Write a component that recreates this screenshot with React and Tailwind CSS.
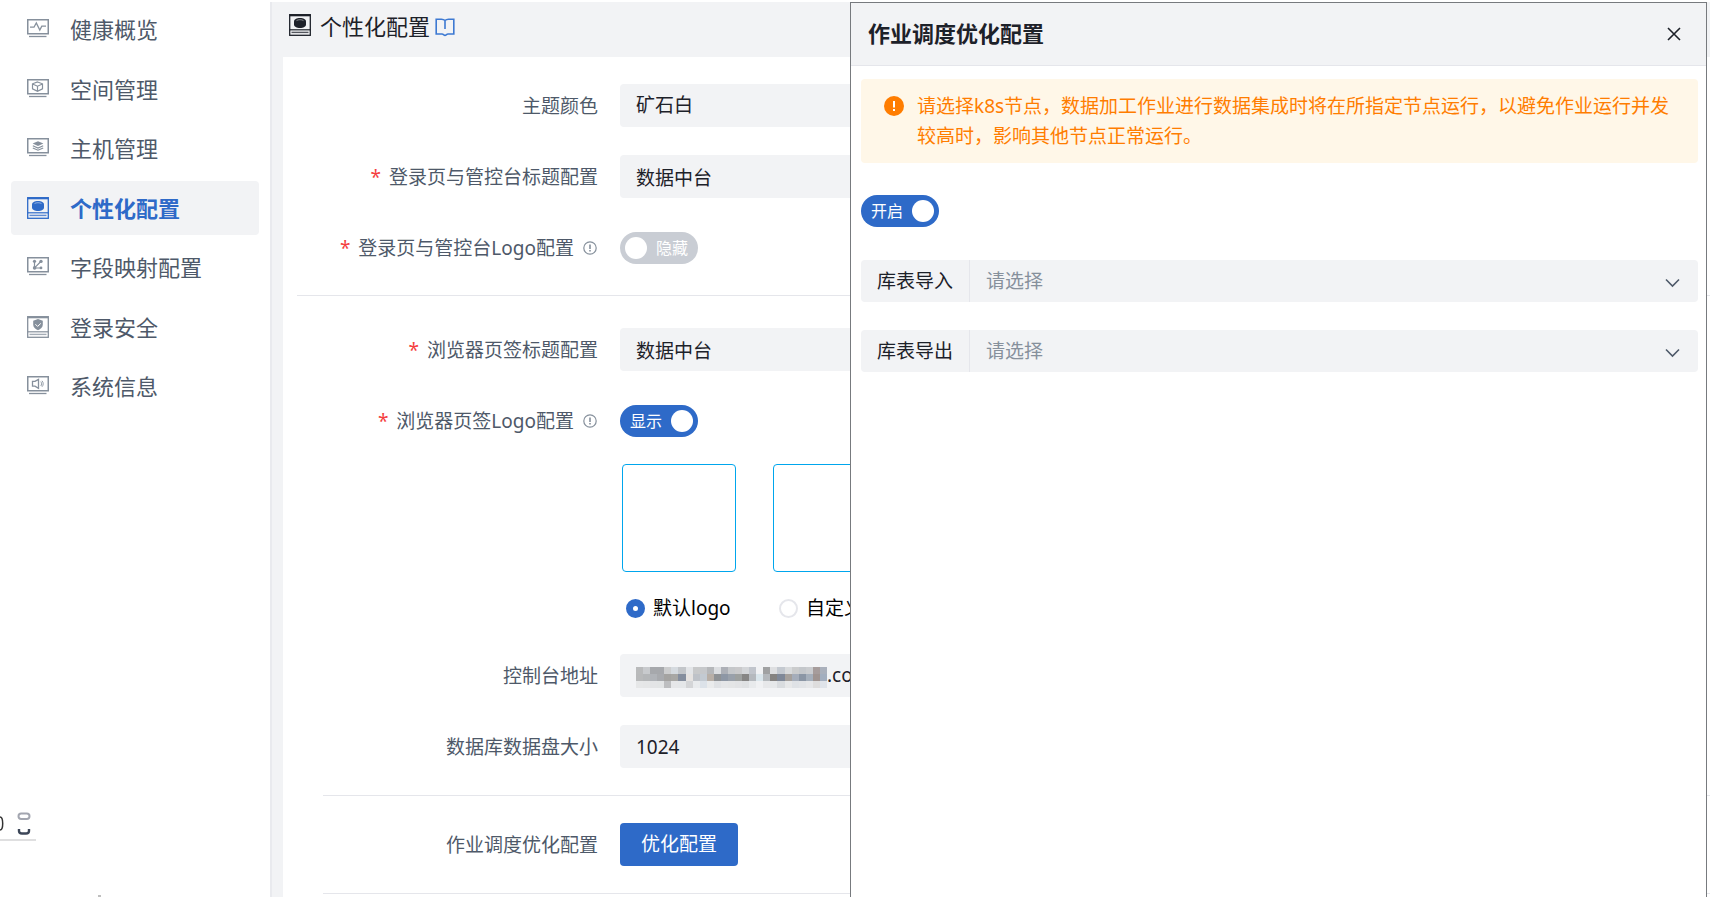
import { useState } from "react";
import clsx from "clsx";

const Monitor = ({ children }) => (
  <svg width="22" height="22" viewBox="0 0 22 22" fill="none" stroke="currentColor">
    <g transform="translate(0 1)">
      <rect x="0.75" y="0.75" width="20.5" height="14" strokeWidth="1.5" />
      <path d="M2 17.5H19.5" strokeWidth="1.3" />
      {children}
    </g>
  </svg>
);

const Cabinet = ({ children }) => (
  <svg width="22" height="22" viewBox="0 0 22 22" fill="none" stroke="currentColor">
    <rect x="0.7" y="0.7" width="20.6" height="20.6" strokeWidth="1.3" />
    <path d="M0.5 1.3H21.5" strokeWidth="2" />
    <path d="M0.5 15.8H21.5" strokeWidth="1.2" />
    <path d="M2.5 18.4H19.5" strokeWidth="1.4" strokeOpacity="0.75" />
    {children}
  </svg>
);

const HealthIcon = () => (
  <Monitor>
    <path d="M3 8.2H7L9.3 4L12.8 11L14.8 7.2H19" strokeWidth="1.3" />
  </Monitor>
);

const SpaceIcon = () => (
  <Monitor>
    <path d="M10.5 3L15.5 4.8V9.8L10.5 12.3L5.5 9.8V4.8ZM5.5 5L10.5 7.2L15.5 5M10.5 7.2V12.2" strokeWidth="1.2" />
  </Monitor>
);

const HostIcon = () => (
  <Monitor>
    <path d="M11 3.2L16.4 5.6L11 8L5.6 5.6Z" fill="currentColor" stroke="none" />
    <path d="M5.8 7.8L11 10L16.2 7.8M5.8 10L11 12.2L16.2 10" strokeWidth="1.2" />
  </Monitor>
);

const PersonalIcon = () => (
  <Cabinet>
    <path d="M5 7.5C5 5.4 7.6 4 11 4S17 5.4 17 7.5V10.5C17 12.6 14.4 14 11 14S5 12.6 5 10.5Z" fill="currentColor" stroke="none" />
    <path d="M7.5 6.6C9 5.4 13 5.4 14.5 6.6" stroke="#fff" strokeOpacity="0.5" strokeWidth="0.9" />
  </Cabinet>
);

const FieldIcon = () => (
  <Monitor>
    <path d="M7.5 4.5V11H13.5M7.8 10.7L13.8 4.5" strokeWidth="1.2" />
    <g fill="currentColor" stroke="none">
      <circle cx="7.5" cy="4.3" r="1.6" />
      <circle cx="14" cy="4.4" r="1.7" />
      <circle cx="7.6" cy="10.9" r="1.8" />
      <circle cx="14" cy="10.9" r="1.4" />
    </g>
  </Monitor>
);

const SecurityIcon = () => (
  <Cabinet>
    <path d="M11 3L15.8 4.8V8.8C15.8 11.4 13.6 13.3 11 14.2C8.4 13.3 6.2 11.4 6.2 8.8V4.8Z" fill="currentColor" stroke="none" />
    <path d="M8.4 8.2L10.6 10.4L13.8 7.4" stroke="#fff" strokeWidth="1" />
  </Cabinet>
);

const SystemIcon = () => (
  <Monitor>
    <path d="M5.5 5.4V10.2H8L11.5 12.4V3.4L8 5.4Z" strokeWidth="1.3" />
    <path d="M13.8 5.6C14.8 6.8 14.8 8.8 13.8 10M15 4.8C16.6 6.4 16.6 9.2 15 10.8" strokeWidth="0.9" />
  </Monitor>
);

const BookIcon = () => (
  <svg width="20" height="19" viewBox="0 0 20 19" fill="none" stroke="#3d79d2" strokeWidth="1.6">
    <path d="M10 2.5C8.8 1.4 7.6 1.2 6.5 1.2H1.2V16H7C8.5 16 9 17.4 10 17.4S11.5 16 13 16H18.8V1.2H13.5C12.4 1.2 11.2 1.4 10 2.5ZM10 2.5V11" />
  </svg>
);

const HintIcon = () => (
  <svg width="14" height="14" viewBox="0 0 14 14" fill="none" stroke="#86909c" strokeWidth="1.2">
    <circle cx="7" cy="7" r="6.2" />
    <path d="M7 3.4V8M7 9V10.4" strokeWidth="1.6" />
  </svg>
);

const menu = [
  { text: "健康概览", icon: HealthIcon },
  { text: "空间管理", icon: SpaceIcon },
  { text: "主机管理", icon: HostIcon },
  { text: "个性化配置", icon: PersonalIcon },
  { text: "字段映射配置", icon: FieldIcon },
  { text: "登录安全", icon: SecurityIcon },
  { text: "系统信息", icon: SystemIcon },
];

// colours of the masked part of the console address, one cell each
const mask = [
  ["#b9babb", "#c8cacd", "#a6a8ac", "#a6a8ac", "#cccdce", "#d5dadf", "#c3c6ca", "#e3e5e8", "#c8c9ca", "#c6c8cb", "#b5b7ba", "#dcdee1", "#adb0b7", "#c5c7ca", "#c9c9cb", "#d3d5d8", "#c1c5cc", "#f1f2f4", "#a0a1a2", "#dedfe1", "#c4c9d0", "#d8dadc", "#cbcccd", "#c4c7cb", "#cacccf", "#a69c9b", "#aab0bc"],
  ["#b8b9ba", "#b4b6b8", "#b0b3b8", "#a8aaae", "#a4a3a1", "#a8a7a4", "#858e9e", "#e6e3e1", "#bec2c8", "#c3cad2", "#b8afa7", "#8f9295", "#8e97a5", "#99a0aa", "#9da09f", "#868584", "#b5b9be", "#dae6ec", "#b4b8bc", "#858381", "#7f8898", "#a5a09c", "#a5adba", "#8b96a5", "#a5afbb", "#9f9491", "#a3aebf"],
  ["#e6e7e8", "#e5e6e7", "#e3e4e6", "#e2e4e5", "#bdbec0", "#e6e7e9", "#e5e7e9", "#d4d5d7", "#e9ebed", "#dce2e9", "#eaebec", "#e0e2e5", "#e5e6e8", "#e4e5e6", "#e2e3e5", "#dfe1e3", "#e8eaec", "#f0f1f3", "#e7e8ea", "#e6e8ea", "#d9dcdf", "#e7e8e9", "#dfe2e6", "#e2e4e7", "#e6e7e9", "#dedddd", "#dfe3e9"],
];

const Mask = () => (
  <svg className="mt-1 shrink-0" width="191" height="21" viewBox="0 0 189 21" preserveAspectRatio="none" shapeRendering="crispEdges">
    {mask.map((row, y) =>
      row.map((fill, x) => <rect key={`${x}-${y}`} x={x * 7} y={y * 7} width="7" height="7" fill={fill} />)
    )}
  </svg>
);

const Switch = ({ id, checked, onChange, on, off }) => (
  <label
    className={clsx(
      "relative flex h-8 w-[78px] cursor-pointer items-center rounded-full text-[16px] leading-none text-white",
      checked ? "justify-between bg-[#2e6ac8] pl-[10px] pr-[5px]" : "flex-row-reverse justify-between bg-[#c9cdd4] pl-[5px] pr-[10px]"
    )}
  >
    <input
      id={id}
      type="checkbox"
      role="switch"
      className="absolute inset-0 cursor-pointer appearance-none"
      checked={checked}
      onChange={(e) => onChange(e.target.checked)}
    />
    <span>{checked ? on : off}</span>
    <span className="size-[22px] rounded-full bg-white" />
  </label>
);

const Row = ({ label, htmlFor, required, hint, children }) => (
  <div className="flex min-h-[43px] items-center gap-[22px]">
    <div className="flex w-[315px] shrink-0 items-center justify-end text-[19px] leading-7 text-[#4e5969]">
      {required && <span className="mr-2 text-[#f53f3f]">*</span>}
      <label htmlFor={htmlFor}>{label}</label>
      {hint && (
        <span className="ml-[9px] mr-px">
          <HintIcon />
        </span>
      )}
    </div>
    {children}
  </div>
);

const inputClass = "h-[43px] min-w-0 flex-1 rounded bg-[#f2f3f5] px-4 text-[19px] text-[#1d2129] outline-none";

const NodeSelect = ({ id, label }) => (
  <div className="flex h-[42px] items-center rounded bg-[#f2f3f5] text-[19px]">
    <label htmlFor={id} className="flex h-full w-[109px] items-center justify-center border-r border-[#e5e6eb] leading-7 text-[#1d2129]">
      {label}
    </label>
    <div className="relative h-full flex-1">
      <select id={id} className="h-full w-full appearance-none rounded-r bg-transparent pl-4 pr-10 text-[#86909c] outline-none">
        <option>请选择</option>
      </select>
      <svg className="pointer-events-none absolute right-[18px] top-[18px]" width="15" height="10" viewBox="0 0 15 10" fill="none" stroke="#4e5969" strokeWidth="1.6">
        <path d="M1 1.5L7.5 8L14 1.5" />
      </svg>
    </div>
  </div>
);

const radioClass =
  "size-[19px] appearance-none rounded-full border-2 border-[#e5e6eb] bg-white checked:border-[7px] checked:border-[#2e6ac8]";

const App = () => {
  const [active, setActive] = useState("个性化配置");
  const [loginLogo, setLoginLogo] = useState(false);
  const [tabLogo, setTabLogo] = useState(true);
  const [logoType, setLogoType] = useState("default");
  const [enabled, setEnabled] = useState(true);
  const [open, setOpen] = useState(true);

  return (
    <div className="relative flex h-screen overflow-hidden bg-white pt-[2px] font-['Noto_Sans','Noto_Sans_CJK_SC',sans-serif]">
      <aside className="flex w-[270px] shrink-0 flex-col justify-between">
        <nav className="flex h-[411px] flex-col justify-between px-[11px]">
          {menu.map(({ text, icon: Icon }) => (
            <button
              key={text}
              onClick={() => setActive(text)}
              className={clsx(
                "flex h-[54px] items-center gap-[21px] rounded pl-4 text-[22px] leading-8",
                active === text ? "bg-[#f2f3f5] font-bold text-[#2e6ac8]" : "text-[#4e5969]"
              )}
            >
              <span className={active === text ? "text-[#2e6ac8]" : "text-[#86909c]"}>
                <Icon />
              </span>
              {text}
            </button>
          ))}
        </nav>
        <svg className="shrink-0" width="110" height="90" viewBox="0 0 110 90" fill="none">
          <path d="M0 10C3.6 10 3.6 23 0 23" stroke="#333" strokeWidth="1.5" />
          <rect x="18.5" y="6.5" width="11" height="5.5" rx="2.7" stroke="#a3a6b0" strokeWidth="2" />
          <path d="M19 22V24C19 26 20 26.5 22 26.5H26C28 26.5 29 26 29 24V22" stroke="#3c4658" strokeWidth="2.4" />
          <path d="M0 33H36" stroke="#d4d4d6" strokeWidth="1.5" />
          <path d="M98 89H101" stroke="#aaa" strokeWidth="1.5" />
        </svg>
      </aside>

      <main className="flex min-w-0 flex-1 flex-col border-l-2 border-[#e9eaee] bg-[#f2f3f5]">
        <header className="flex h-[55px] shrink-0 items-start pl-[17px] pt-2 text-[#1d2129]">
          <span className="mt-1">
            <PersonalIcon />
          </span>
          <h1 className="ml-[9px] mr-[5px] text-[22px] leading-8">个性化配置</h1>
          <a href="#help" aria-label="帮助文档" className="mt-2">
            <BookIcon />
          </a>
        </header>

        <div className="ml-[11px] flex flex-1 flex-col bg-white pt-[27px]">
          <div className="flex flex-col gap-7 pr-8">
            <Row label="主题颜色" htmlFor="theme">
              <select id="theme" className={clsx(inputClass, "appearance-none")}>
                <option>矿石白</option>
              </select>
            </Row>
            <Row label="登录页与管控台标题配置" htmlFor="login-title" required>
              <input id="login-title" className={inputClass} defaultValue="数据中台" />
            </Row>
            <Row label="登录页与管控台Logo配置" htmlFor="login-logo" required hint>
              <Switch id="login-logo" checked={loginLogo} onChange={setLoginLogo} on="显示" off="隐藏" />
            </Row>
          </div>

          <hr className="mb-8 ml-[14px] mt-[26px] border-[#e5e6eb]" />

          <div className="flex flex-col gap-7 pr-8">
            <Row label="浏览器页签标题配置" htmlFor="tab-title" required>
              <input id="tab-title" className={inputClass} defaultValue="数据中台" />
            </Row>
            <Row label="浏览器页签Logo配置" htmlFor="tab-logo" required hint>
              <Switch id="tab-logo" checked={tabLogo} onChange={setTabLogo} on="显示" off="隐藏" />
            </Row>
          </div>

          <div className="ml-[339px] mt-[22px] flex gap-[37px] text-[19px] leading-7 text-black">
            <div className="flex flex-col gap-[22px]">
              <div className="h-[108px] w-[114px] rounded border border-[#00a6ed]" />
              <label className="flex items-center gap-2 pl-1">
                <input type="radio" name="logo" className={radioClass} checked={logoType === "default"} onChange={() => setLogoType("default")} />
                默认logo
              </label>
            </div>
            <div className="flex flex-col gap-[22px]">
              <div className="h-[108px] w-[114px] rounded border border-[#00a6ed]" />
              <label className="flex items-center gap-2 pl-[6px]">
                <input type="radio" name="logo" className={radioClass} checked={logoType === "custom"} onChange={() => setLogoType("custom")} />
                自定义
              </label>
            </div>
          </div>

          <div className="mt-8 flex flex-col gap-7 pr-8">
            <Row label="控制台地址" htmlFor="console-url">
              <div className="flex h-[43px] min-w-0 flex-1 items-center rounded bg-[#f2f3f5] pl-4">
                <Mask />
                <input id="console-url" className="min-w-0 flex-1 bg-transparent text-[19px] text-[#1d2129] outline-none" defaultValue=".com" />
              </div>
            </Row>
            <Row label="数据库数据盘大小" htmlFor="disk">
              <input id="disk" className={inputClass} defaultValue="1024" />
            </Row>
          </div>

          <hr className="my-[27px] ml-10 border-[#e5e6eb]" />
          <Row label="作业调度优化配置" htmlFor="optimize">
            <button id="optimize" onClick={() => setOpen(true)} className="h-[43px] rounded bg-[#2e6ac8] px-[21px] text-[19px] text-white">
              优化配置
            </button>
          </Row>
          <hr className="mt-[27px] ml-10 border-[#e5e6eb]" />
        </div>
      </main>

      {open && (
        <section className="absolute bottom-0 right-[3px] top-[2px] flex w-[857px] flex-col border border-b-0 border-[#777a7e] bg-white">
          <header className="flex h-[63px] shrink-0 items-center justify-between border-b border-[#e5e6eb] bg-[#f2f3f5] pl-[17px] pr-[25px]">
            <h2 className="pb-[2px] text-[22px] font-bold leading-8 text-[#1d2129]">作业调度优化配置</h2>
            <button aria-label="关闭" onClick={() => setOpen(false)}>
              <svg width="14" height="14" viewBox="0 0 14 14" fill="none" stroke="#1d2129" strokeWidth="1.6">
                <path d="M1 1L13 13M13 1L1 13" />
              </svg>
            </button>
          </header>
          <div className="flex flex-col pl-[10px] pr-2 pt-[13px]">
            <div className="flex gap-[13px] rounded bg-[#fff7e8] py-3 pl-[23px] pr-5 text-[#ff7d00]">
              <svg className="mt-[5px] shrink-0" width="20" height="20" viewBox="0 0 20 20">
                <circle cx="10" cy="10" r="10" fill="#ff7d00" />
                <path d="M10 5V11.4M10 13V15" stroke="#fff" strokeWidth="2" />
              </svg>
              <p className="text-[19px] leading-[30px]">
                请选择k8s节点，数据加工作业进行数据集成时将在所指定节点运行，以避免作业运行并发较高时，影响其他节点正常运行。
              </p>
            </div>
            <div className="mb-[33px] mt-8">
              <Switch id="schedule" checked={enabled} onChange={setEnabled} on="开启" off="关闭" />
            </div>
            <div className="flex flex-col gap-7">
              <NodeSelect id="import-node" label="库表导入" />
              <NodeSelect id="export-node" label="库表导出" />
            </div>
          </div>
        </section>
      )}
    </div>
  );
};

export default App;
